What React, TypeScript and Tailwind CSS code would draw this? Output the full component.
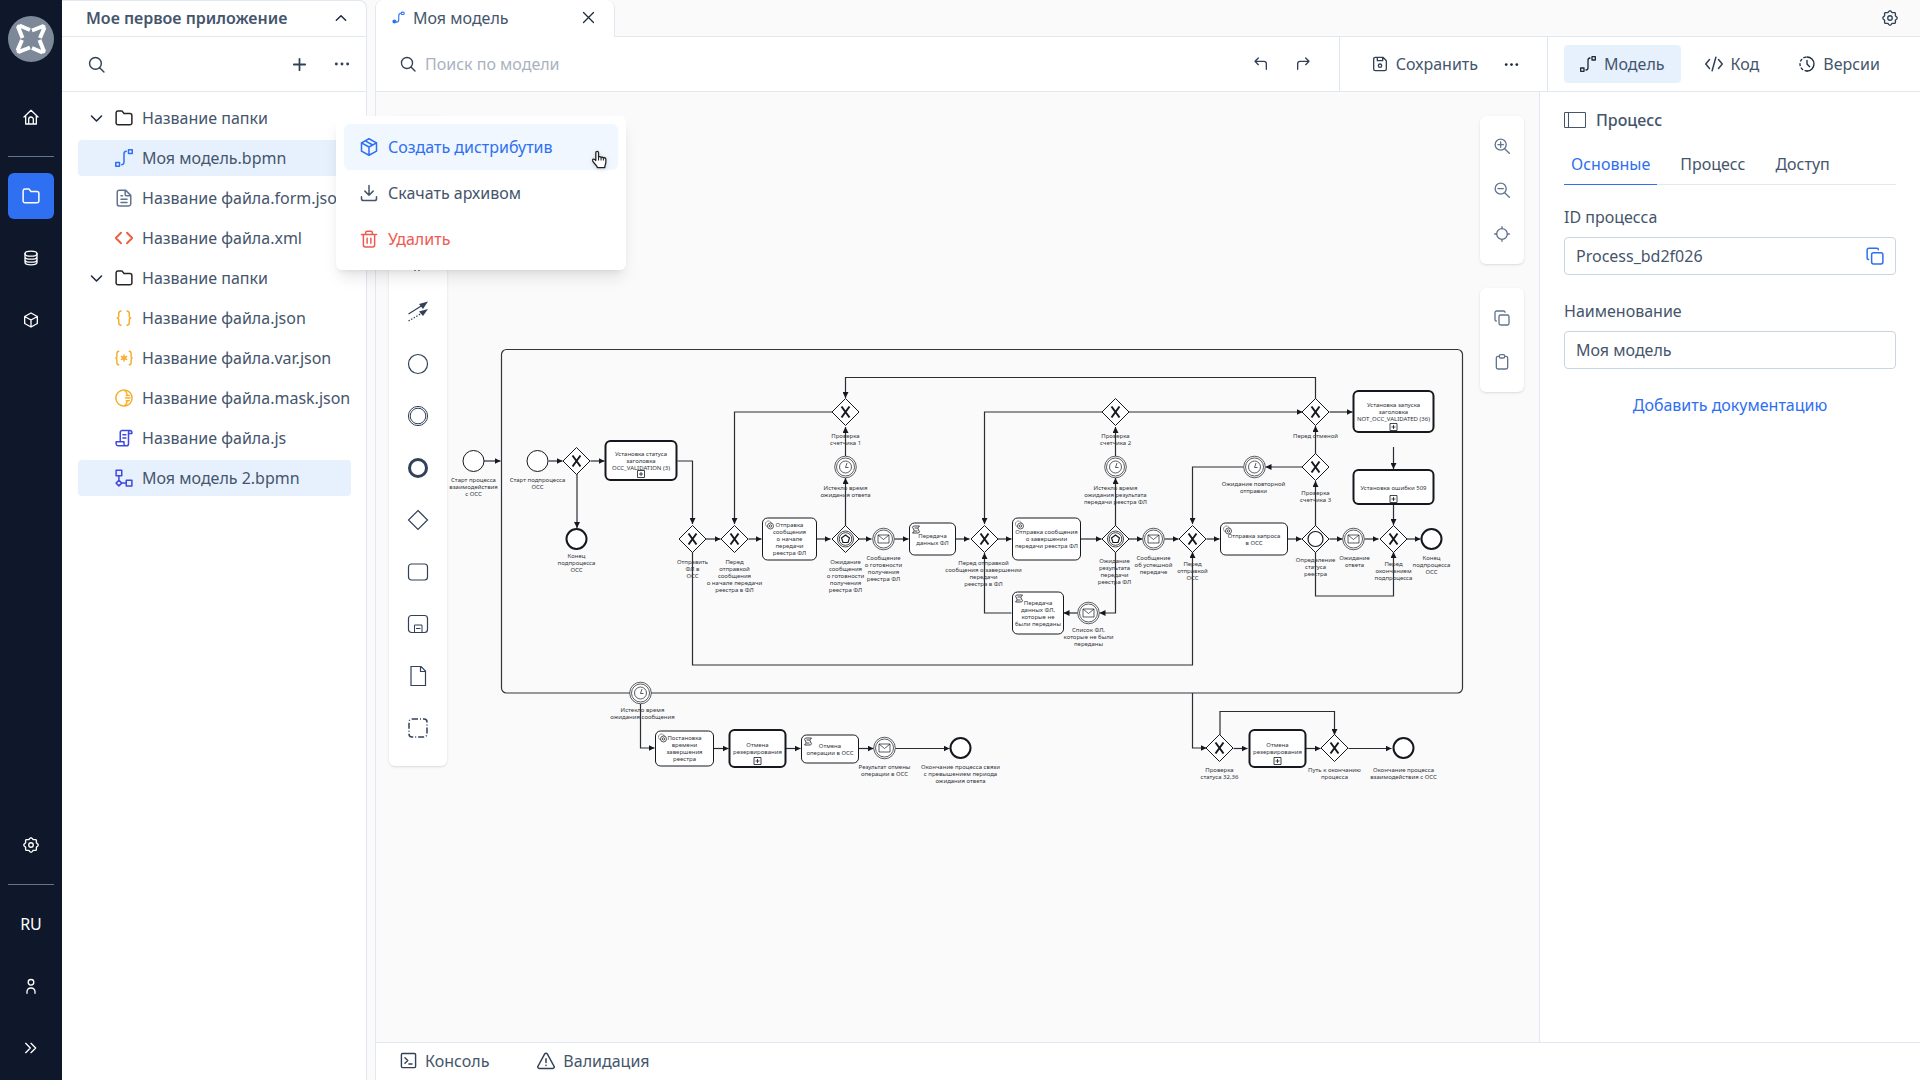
import type { ReactNode } from 'react';

/* ---------- icons ---------- */

type IconProps = { size?: number; className?: string; sw?: number; children?: ReactNode };

function Icon({ size = 18, className = '', sw = 2, children }: IconProps) {
  return (
    <svg
      width={size}
      height={size}
      viewBox="0 0 24 24"
      fill="none"
      stroke="currentColor"
      strokeWidth={sw}
      strokeLinecap="round"
      strokeLinejoin="round"
      className={`shrink-0 ${className}`}
      aria-hidden="true"
    >
      {children}
    </svg>
  );
}

const gearPath = (() => {
  const pts: string[] = [];
  for (let i = 0; i < 96; i++) {
    const a = (i / 96) * Math.PI * 2;
    const r = 9.8 + 1 * Math.cos(8 * a);
    pts.push(`${(12 + r * Math.sin(a)).toFixed(2)} ${(12 - r * Math.cos(a)).toFixed(2)}`);
  }
  return `M${pts.join('L')}Z`;
})();

const GearIcon = (p: IconProps) => (
  <Icon {...p}>
    <path d={gearPath} />
    <circle cx="12" cy="12" r="3.4" />
  </Icon>
);
const HomeIcon = (p: IconProps) => (
  <Icon {...p}>
    <path d="M1.5 12 12 2l10.500 10M4 10v12.500h16V10M8.500 22V15.500a3.500 3.500 0 0 1 7 0V22" />
  </Icon>
);
const FolderIcon = (p: IconProps) => (
  <Icon {...p}>
    <path d="M1.500 5v13.500A2.500 2.500 0 0 0 4 21h16a2.500 2.500 0 0 0 2.500-2.500v-10A2.500 2.500 0 0 0 20 6h-8L9.500 2.800H4A2.500 2.500 0 0 0 1.500 5Z" />
  </Icon>
);
const DatabaseIcon = (p: IconProps) => (
  <Icon {...p}>
    <ellipse cx="12" cy="5.500" rx="9" ry="3.800" />
    <path d="M3 5.500v13c0 2.100 4 3.800 9 3.800s9-1.700 9-3.800v-13M3 10c0 2.100 4 3.800 9 3.800s9-1.700 9-3.800M3 14.500c0 2.100 4 3.800 9 3.800s9-1.700 9-3.800" />
  </Icon>
);
const CubeIcon = (p: IconProps) => (
  <Icon {...p}>
    <path d="M12 1.500 21.500 6.800v10.400L12 22.500 2.500 17.200V6.800ZM2.500 6.800 12 12l9.500-5.200M12 12v10.500" />
  </Icon>
);
const PackageIcon = (p: IconProps) => (
  <Icon {...p}>
    <path d="M12 1 22 6.500v11L12 23 2 17.500v-11ZM2 6.500 12 12l10-5.500M12 12v11M7 3.800 17 9.300" />
  </Icon>
);
const UserIcon = (p: IconProps) => (
  <Icon {...p}>
    <circle cx="12" cy="6.500" r="4.200" />
    <path d="M6 23v-2.500A5.500 5.500 0 0 1 11.500 15h1a5.500 5.500 0 0 1 5.500 5.500V23" />
  </Icon>
);
const ExpandIcon = (p: IconProps) => (
  <Icon {...p}>
    <path d="m4 5 7 7-7 7M12 5l7 7-7 7" />
  </Icon>
);
const SearchIcon = (p: IconProps) => (
  <Icon {...p}>
    <circle cx="10.500" cy="10.500" r="8.300" />
    <path d="m16.500 16.500 6 6" />
  </Icon>
);
const PlusIcon = (p: IconProps) => (
  <Icon {...p}>
    <path d="M12 4v16M4 12h16" />
  </Icon>
);
const DotsIcon = (p: IconProps) => (
  <Icon {...p}>
    <g fill="currentColor" stroke="none">
      <circle cx="3.500" cy="12" r="2.200" />
      <circle cx="12" cy="12" r="2.200" />
      <circle cx="20.500" cy="12" r="2.200" />
    </g>
  </Icon>
);
const ChevronDown = (p: IconProps) => (
  <Icon {...p}>
    <path d="m4 8 8 8 8-8" />
  </Icon>
);
const ChevronUp = (p: IconProps) => (
  <Icon {...p}>
    <path d="m4 16 8-8 8 8" />
  </Icon>
);
const CloseIcon = (p: IconProps) => (
  <Icon {...p}>
    <path d="m4 4 16 16M20 4 4 20" />
  </Icon>
);
const FlowIcon = (p: IconProps) => (
  <Icon {...p}>
    <rect x="1" y="18" width="5" height="5" />
    <rect x="18" y="1" width="5" height="5" />
    <path d="M9 21a3.500 3.500 0 0 0 3-3.500v-11A3.500 3.500 0 0 1 15 3" />
  </Icon>
);
const FlowFilledIcon = (p: IconProps) => (
  <Icon {...p}>
    <circle cx="4.500" cy="19.500" r="2.800" fill="currentColor" />
    <rect x="17" y="2" width="5.500" height="4.500" rx="2" />
    <path d="M8 20.500c3.500 0 4.500-1.500 4.500-5V9c0-3.500.5-5 4-5" />
  </Icon>
);
const FileTextIcon = (p: IconProps) => (
  <Icon {...p}>
    <path d="M14 1.500H5.500a2.500 2.500 0 0 0-2.500 2.500v16a2.500 2.500 0 0 0 2.500 2.500h13A2.500 2.500 0 0 0 21 20V8.500ZM13.500 2v5a2 2 0 0 0 2 2h5M8 9h2M8 13.500h8M8 18h8" />
  </Icon>
);
const AngleIcon = (p: IconProps) => (
  <Icon {...p}>
    <path d="m8 5-7 7 7 7M16 5l7 7-7 7" />
  </Icon>
);
const BracesIcon = (p: IconProps) => (
  <Icon {...p}>
    <path d="M8 2.500c-3 0-3 1.500-3 4v2C5 10.500 4.500 12 3 12c1.500 0 2 1.500 2 3.500v2c0 2.500 0 4 3 4M16 2.500c3 0 3 1.500 3 4v2c0 2 .5 3.500 2 3.500-1.500 0-2 1.500-2 3.500v2c0 2.500 0 4-3 4" />
  </Icon>
);
const VarIcon = (p: IconProps) => (
  <Icon {...p}>
    <path d="M5 3C2.500 3 2.500 4.500 2.500 6.500v3c0 1.500-.5 2.500-1.500 2.500 1 0 1.500 1 1.500 2.500v3c0 2 0 3.500 2.500 3.500M19 3c2.500 0 2.500 1.500 2.500 3.500v3c0 1.500.5 2.500 1.500 2.500-1 0-1.500 1-1.500 2.500v3c0 2 0 3.500-2.500 3.500M12 8v8M8.500 10l7 4M15.500 10l-7 4" />
  </Icon>
);
const MaskIcon = (p: IconProps) => (
  <Icon {...p}>
    <circle cx="12" cy="12" r="10.800" />
    <path d="M13 2c3 2.500 3 4 3 5M13 22c3-2.500 3-4 3-5M15 8.500h4M14 12h6M15 15.500h4" />
  </Icon>
);
const ScriptFileIcon = (p: IconProps) => (
  <Icon {...p}>
    <path d="M7 17V4.500A2.500 2.500 0 0 1 9.500 2H20a2.500 2.500 0 0 1 2.500 3v1H18V4.500A2.300 2.300 0 0 1 20 2M18 6v13.500a2.800 2.800 0 0 1-2.800 2.800H4A2.500 2.500 0 0 1 1.500 20v-3H12v3a2.500 2.500 0 0 0 3 2.300M10.500 7.500h4M10.500 12h4" />
  </Icon>
);
const DiagramFileIcon = (p: IconProps) => (
  <Icon {...p}>
    <rect x="1.500" y="1.500" width="7.500" height="7.500" />
    <rect x="15" y="15" width="7.500" height="7.500" />
    <path d="M5.200 9v6M9 18.800h6M5.200 15 9 18.800l-3.800 3.700-3.700-3.700Z" />
  </Icon>
);
const DownloadIcon = (p: IconProps) => (
  <Icon {...p}>
    <path d="M12 2v13M6.500 9.500 12 15l5.500-5.500M2 17v2.500A2.500 2.500 0 0 0 4.500 22h15a2.500 2.500 0 0 0 2.500-2.500V17" />
  </Icon>
);
const TrashIcon = (p: IconProps) => (
  <Icon {...p}>
    <path d="M2 6h20M4.500 6v14A2.500 2.500 0 0 0 7 22.500h10a2.500 2.500 0 0 0 2.500-2.500V6M7.500 6V3.500a2 2 0 0 1 2-2h5a2 2 0 0 1 2 2V6M9.500 11v6.500M14.500 11v6.500" />
  </Icon>
);
const UndoIcon = (p: IconProps) => (
  <Icon {...p}>
    <path d="M8 3 3 8l5 5M3 8h13.500A3.500 3.500 0 0 1 20 11.500V20" />
  </Icon>
);
const RedoIcon = (p: IconProps) => (
  <Icon {...p}>
    <path d="m16 3 5 5-5 5M21 8H7.500A3.500 3.500 0 0 0 4 11.500V20" />
  </Icon>
);
const SaveIcon = (p: IconProps) => (
  <Icon {...p}>
    <path d="M2.500 4.500v15A2.500 2.500 0 0 0 5 22h14a2.500 2.500 0 0 0 2.500-2.500V7L16.500 2H5a2.500 2.500 0 0 0-2.500 2.500ZM8 2v5h8V2.500" />
    <circle cx="12" cy="14.500" r="2.500" />
  </Icon>
);
const CodeIcon = (p: IconProps) => (
  <Icon {...p}>
    <path d="m6 6-5 6 5 6M18 6l5 6-5 6M14.500 3l-5 18" />
  </Icon>
);
const HistoryIcon = (p: IconProps) => (
  <Icon {...p}>
    <path d="M12 1.500a10.500 10.500 0 0 1 0 21" />
    <path d="M12 22.500a10.500 10.500 0 0 1 0-21" strokeDasharray="3 4" />
    <path d="M12 6.500V12l4 4" />
  </Icon>
);
const ZoomInIcon = (p: IconProps) => (
  <Icon {...p}>
    <circle cx="10" cy="10" r="8.300" />
    <path d="m16 16 7 7M10 6v8M6 10h8" />
  </Icon>
);
const ZoomOutIcon = (p: IconProps) => (
  <Icon {...p}>
    <circle cx="10" cy="10" r="8.300" />
    <path d="m16 16 7 7M6 10h8" />
  </Icon>
);
const TargetIcon = (p: IconProps) => (
  <Icon {...p}>
    <circle cx="12" cy="12" r="8" />
    <path d="M12 1v3M12 20v3M1 12h3M20 12h3" />
  </Icon>
);
const CopyIcon = (p: IconProps) => (
  <Icon {...p}>
    <rect x="7.500" y="7.500" width="15" height="15" rx="2.500" />
    <path d="M3.500 16.500A2 2 0 0 1 1.500 14.500V4A2.500 2.500 0 0 1 4 1.500h10.500a2 2 0 0 1 2 2" />
  </Icon>
);
const ClipboardIcon = (p: IconProps) => (
  <Icon {...p}>
    <path d="M8 3.500H6A2.500 2.500 0 0 0 3.500 6v14A2.500 2.500 0 0 0 6 22.500h12a2.500 2.500 0 0 0 2.500-2.500V6A2.500 2.500 0 0 0 18 3.500h-2" />
    <rect x="8" y="1" width="8" height="5" rx="2" />
  </Icon>
);
const ConsoleIcon = (p: IconProps) => (
  <Icon {...p}>
    <rect x="2" y="2" width="20" height="20" rx="1.500" />
    <path d="m7 8 4 4-4 4M12.500 17H17" />
  </Icon>
);
const WarningIcon = (p: IconProps) => (
  <Icon {...p}>
    <path d="M10.300 2.500a2 2 0 0 1 3.400 0l9 16.500a2 2 0 0 1-1.700 3H3a2 2 0 0 1-1.700-3ZM12 9v5M12 17.500v.5" />
  </Icon>
);

function Logo() {
  return (
    <svg viewBox="0 0 46 46" className="size-[46px]" aria-hidden="true">
      <circle cx="23" cy="23" r="23" fill="#7d8899" />
      <g stroke="#fff" strokeWidth="4" strokeLinecap="butt">
        {[0, 90, 180, 270].map((r) => (
          <g key={r} transform={`rotate(${r} 23 23)`}>
            <path d="m22 14-10.500-4.500M10 10.500 14.500 22" />
          </g>
        ))}
      </g>
      <g fill="#fff">
        {[0, 90, 180, 270].map((r) => (
          <circle key={r} cx="11" cy="11" r="2.500" transform={`rotate(${r} 23 23)`} />
        ))}
      </g>
    </svg>
  );
}

function HandCursor() {
  return (
    <svg viewBox="0 0 16 18" className="pointer-events-none absolute top-[26px] right-2.5 h-[19px] w-[17px] drop-shadow-sm" aria-hidden="true">
      <path
        d="M4.500 10V2.500a1.300 1.300 0 0 1 2.600 0V7c0-1 2.400-1 2.400.3 0-1 2.200-.8 2.200.5 0-1 2.300-.7 2.300.8v3c0 2-1 2.800-1 5H6c-.5-2-3.500-4-4.500-6.500C1 8.500 3 8 4.500 10Z"
        fill="#fff"
        stroke="#222"
        strokeWidth="1.200"
        strokeLinejoin="round"
      />
      <path d="M7.100 7v3M9.500 7.500V10M11.700 8v2" stroke="#222" strokeWidth="1" />
    </svg>
  );
}

/* ---------- diagram ---------- */

const INK = '#15181e';

function Label({ x, y, lines }: { x: number; y: number; lines: string[] }) {
  return (
    <text x={x} textAnchor="middle" fontSize="6" fill="#30343b">
      {lines.map((l, i) => (
        <tspan key={i} x={x} y={y + 2 + i * 7}>
          {l}
        </tspan>
      ))}
    </text>
  );
}

function Gateway({ x, y, kind = 'x' }: { x: number; y: number; kind?: 'x' | 'event' | 'o' }) {
  return (
    <g>
      <path d={`M${x} ${y - 13.5}L${x + 13.5} ${y}L${x} ${y + 13.5}L${x - 13.5} ${y}Z`} fill="#fff" stroke={INK} />
      {kind === 'x' && (
        <path d={`M${x - 4} ${y - 5.5}L${x + 4} ${y + 5.5}M${x + 4} ${y - 5.5}L${x - 4} ${y + 5.5}`} stroke={INK} strokeWidth="2" />
      )}
      {kind === 'o' && <circle cx={x} cy={y} r="7.500" fill="#fff" stroke={INK} strokeWidth="1.200" />}
      {kind === 'event' && (
        <g fill="none" stroke={INK} strokeWidth="0.800">
          <circle cx={x} cy={y} r="8" />
          <circle cx={x} cy={y} r="6.300" />
          <path d={`M${x} ${y - 4}l4 3-1.500 4.500h-5l-1.500-4.500Z`} strokeWidth="1.200" />
        </g>
      )}
    </g>
  );
}

function Event({ x, y, kind }: { x: number; y: number; kind: 'start' | 'end' | 'timer' | 'message' }) {
  if (kind === 'start') return <circle cx={x} cy={y} r="10.500" fill="#fff" stroke={INK} />;
  if (kind === 'end') return <circle cx={x} cy={y} r="10" fill="#fff" stroke={INK} strokeWidth="2" />;
  return (
    <g fill="none" stroke={INK} strokeWidth="0.700">
      <circle cx={x} cy={y} r="10.800" fill="#fff" />
      <circle cx={x} cy={y} r="9" />
      {kind === 'timer' ? (
        <>
          <circle cx={x} cy={y} r="6" />
          <path d={`M${x + 1.5} ${y - 4}L${x} ${y + 0.5}L${x + 3} ${y + 0.5}`} />
        </>
      ) : (
        <path d={`M${x - 5.5} ${y - 4}h11v8h-11ZM${x - 5.5} ${y - 4}l5.500 4.500l5.500-4.500`} />
      )}
    </g>
  );
}

type TaskProps = {
  x: number;
  y: number;
  w: number;
  h: number;
  lines: string[];
  ty: number;
  thick?: boolean;
  plus?: number;
  icon?: 'service' | 'script';
};

function Task({ x, y, w, h, lines, ty, thick, plus, icon }: TaskProps) {
  const cx = x + w / 2;
  return (
    <g>
      <rect x={x} y={y} width={w} height={h} rx="5" fill="#fff" stroke={INK} strokeWidth={thick ? 2 : 1} />
      {icon === 'service' && (
        <g fill="none" stroke={INK} strokeWidth="0.700">
          <circle cx={x + 6} cy={y + 6} r="3" strokeDasharray="1 .5" />
          <circle cx={x + 8} cy={y + 8} r="3" fill="#fff" />
          <circle cx={x + 8} cy={y + 8} r="1.200" />
        </g>
      )}
      {icon === 'script' && (
        <path
          d={`M${x + 4} ${y + 3}h6q-3 2 -1 4t0 3h-6q3 -2 1 -4t0 -3M${x + 5} ${y + 5}h3M${x + 5} ${y + 8}h3`}
          fill="none"
          stroke={INK}
          strokeWidth="0.800"
        />
      )}
      <Label x={cx} y={ty} lines={lines} />
      {plus !== undefined && (
        <path d={`M${cx - 3.5} ${plus - 3.5}h7v7h-7ZM${cx} ${plus - 2}v4M${cx - 2} ${plus}h4`} fill="none" stroke={INK} strokeWidth="0.800" />
      )}
    </g>
  );
}

const flows = [
  'M483 461H500', 'M548 461H562', 'M590 461H604', 'M576.500 474V528', 'M677 461H692V524', 'M705 539H720', 'M748 539H761',
  'M832 412H734V524', 'M816 539H830', 'M845 526V478', 'M845 456V427', 'M1315 399V377.500H845V398', 'M858 539H871',
  'M894 539H908', 'M955 539H969', 'M1102 412H984V524', 'M997 539H1011', 'M1080 539H1101', 'M1115 526V478', 'M1115 456V427',
  'M1128 412H1302', 'M1115 552V613H1099', 'M1077 613H1063', 'M1011 613H984V553', 'M1128 539H1142', 'M1164 539H1178',
  'M692 552V665H1192V552', 'M1243 467H1192V524', 'M1206 539H1219', 'M1287 539H1301', 'M1315 526V481', 'M1315 454V426',
  'M1302 467H1265', 'M1329 412H1352', 'M1393 447V469', 'M1393 505V525', 'M1315 552V596H1393V552', 'M1329 539H1342',
  'M1364 539H1378', 'M1406 539H1420', 'M640 704V748H654', 'M713 748.500H728', 'M785 748.500H800', 'M858 748.500H873',
  'M895 748.500H949', 'M1192 693V748H1206', 'M1219.500 735V711.500H1334V735', 'M1233 748.500H1247', 'M1305 748.500H1320',
  'M1348 748.500H1391',
];

const gateways: { x: number; y: number; kind?: 'x' | 'event' | 'o' }[] = [
  { x: 576, y: 461 }, { x: 692, y: 539 }, { x: 734, y: 539 }, { x: 845, y: 539, kind: 'event' }, { x: 845, y: 412 },
  { x: 984, y: 539 }, { x: 1115, y: 539, kind: 'event' }, { x: 1115, y: 412 }, { x: 1192, y: 539 },
  { x: 1315, y: 539, kind: 'o' }, { x: 1315, y: 467 }, { x: 1315, y: 412 }, { x: 1393, y: 539 }, { x: 1219, y: 748 },
  { x: 1334, y: 748 },
];

const events: { x: number; y: number; kind: 'start' | 'end' | 'timer' | 'message' }[] = [
  { x: 473, y: 461, kind: 'start' }, { x: 537, y: 461, kind: 'start' }, { x: 576, y: 539, kind: 'end' },
  { x: 845, y: 467, kind: 'timer' }, { x: 883, y: 539, kind: 'message' }, { x: 1115, y: 467, kind: 'timer' },
  { x: 1088, y: 613, kind: 'message' }, { x: 1153, y: 539, kind: 'message' }, { x: 1254, y: 467, kind: 'timer' },
  { x: 1353, y: 539, kind: 'message' }, { x: 1431, y: 539, kind: 'end' }, { x: 640, y: 693, kind: 'timer' },
  { x: 884, y: 748, kind: 'message' }, { x: 960, y: 748, kind: 'end' }, { x: 1403, y: 748, kind: 'end' },
];

const tasks: TaskProps[] = [
  { x: 605, y: 441, w: 71, h: 39, thick: true, plus: 474, ty: 454, lines: ['Установка статуса', 'заголовка', 'OCC_VALIDATION (3)'] },
  { x: 762, y: 518, w: 54, h: 42, icon: 'service', ty: 525, lines: ['Отправка', 'сообщения', 'о начале', 'передачи', 'реестра ФЛ'] },
  { x: 909, y: 523, w: 46, h: 32, icon: 'script', ty: 536, lines: ['Передача', 'данных ФЛ'] },
  { x: 1012, y: 518, w: 68, h: 42, icon: 'service', ty: 532, lines: ['Отправка сообщения', 'о завершении', 'передачи реестра ФЛ'] },
  { x: 1012, y: 592, w: 51, h: 42, icon: 'script', ty: 603, lines: ['Передача', 'данных ФЛ,', 'которые не', 'были переданы'] },
  { x: 1220, y: 523, w: 67, h: 32, icon: 'service', ty: 536, lines: ['Отправка запроса', 'в ОСС'] },
  { x: 1353, y: 391, w: 80, h: 41, thick: true, plus: 427, ty: 405, lines: ['Установка запуска', 'заголовка', 'NOT_OCC_VALIDATED (36)'] },
  { x: 1353, y: 470, w: 80, h: 34, thick: true, plus: 499, ty: 488, lines: ['Установка ошибки 509'] },
  { x: 655, y: 731, w: 58, h: 35, icon: 'service', ty: 738, lines: ['Постановка', 'времени', 'завершения', 'реестра'] },
  { x: 729, y: 730, w: 56, h: 37, thick: true, plus: 761, ty: 745, lines: ['Отмена', 'резервирования'] },
  { x: 801, y: 735, w: 57, h: 28, icon: 'script', ty: 746, lines: ['Отмена', 'операции в ОСС'] },
  { x: 1249, y: 730, w: 56, h: 37, thick: true, plus: 761, ty: 745, lines: ['Отмена', 'резервирования'] },
];

const labels: { x: number; y: number; lines: string[] }[] = [
  { x: 473, y: 480, lines: ['Старт процесса', 'взаимодействия', 'с ОСС'] },
  { x: 537, y: 480, lines: ['Старт подпроцесса', 'ОСС'] },
  { x: 576, y: 556, lines: ['Конец', 'подпроцесса', 'ОСС'] },
  { x: 692, y: 562, lines: ['Отправить', 'ФЛ в', 'ОСС'] },
  { x: 734, y: 562, lines: ['Перед', 'отправкой', 'сообщения', 'о начале передачи', 'реестра в ФЛ'] },
  { x: 845, y: 562, lines: ['Ожидание', 'сообщения', 'о готовности', 'получения', 'реестра ФЛ'] },
  { x: 845, y: 488, lines: ['Истекло время', 'ожидания ответа'] },
  { x: 845, y: 436, lines: ['Проверка', 'счетчика 1'] },
  { x: 883, y: 558, lines: ['Сообщение', 'о готовности', 'получения', 'реестра ФЛ'] },
  { x: 983, y: 563, lines: ['Перед отправкой', 'сообщения о завершении', 'передачи', 'реестра в ФЛ'] },
  { x: 1114, y: 561, lines: ['Ожидание', 'результата', 'передачи', 'реестра ФЛ'] },
  { x: 1115, y: 488, lines: ['Истекло время', 'ожидания результата', 'передачи реестра ФЛ'] },
  { x: 1115, y: 436, lines: ['Проверка', 'счетчика 2'] },
  { x: 1088, y: 630, lines: ['Список ФЛ,', 'которые не были', 'переданы'] },
  { x: 1153, y: 558, lines: ['Сообщение', 'об успешной', 'передаче'] },
  { x: 1192, y: 564, lines: ['Перед', 'отправкой', 'ОСС'] },
  { x: 1315, y: 560, lines: ['Определение', 'статуса', 'реестра'] },
  { x: 1315, y: 493, lines: ['Проверка', 'счетчика 3'] },
  { x: 1315, y: 436, lines: ['Перед отменой'] },
  { x: 1253, y: 484, lines: ['Ожидание повторной', 'отправки'] },
  { x: 1393, y: 564, lines: ['Перед', 'окончанием', 'подпроцесса'] },
  { x: 1354, y: 558, lines: ['Ожидание', 'ответа'] },
  { x: 1431, y: 558, lines: ['Конец', 'подпроцесса', 'ОСС'] },
  { x: 642, y: 710, lines: ['Истекло время', 'ожидания сообщения'] },
  { x: 884, y: 767, lines: ['Результат отмены', 'операции в ОСС'] },
  { x: 960, y: 767, lines: ['Окончание процесса связи', 'с превышением периода', 'ожидания ответа'] },
  { x: 1219, y: 770, lines: ['Проверка', 'статуса 32,36'] },
  { x: 1334, y: 770, lines: ['Путь к окончанию', 'процесса'] },
  { x: 1403, y: 770, lines: ['Окончание процесса', 'взаимодействия с ОСС'] },
];

function Diagram() {
  return (
    <svg viewBox="376 92 1163 950" className="absolute top-0 left-0 h-[950px] w-[1163px]" role="img" aria-label="Схема процесса">
      <defs>
        <marker id="arrow" viewBox="0 0 6 6" refX="6" refY="3" markerWidth="6" markerHeight="6" markerUnits="userSpaceOnUse" orient="auto">
          <path d="M0 0 6 3 0 6Z" fill={INK} />
        </marker>
      </defs>
      <rect x="501.500" y="349.500" width="961" height="343.500" rx="5" fill="none" stroke="#33373d" strokeWidth="1.200" />
      <g transform="translate(0.5 0)">
        {flows.map((d) => (
          <path key={d} d={d} fill="none" stroke="#2a2d33" strokeWidth="1.200" markerEnd="url(#arrow)" />
        ))}
        {gateways.map((g, i) => <Gateway key={i} {...g} />)}
        {events.map((e, i) => <Event key={i} {...e} />)}
        {tasks.map((t, i) => <Task key={i} {...t} />)}
        {labels.map((l, i) => <Label key={i} {...l} />)}
      </g>
    </svg>
  );
}

/* ---------- palette ---------- */

const paletteTools: { name: string; art: ReactNode }[] = [
  { name: 'Рука', art: <path d="M6 12V5M9 11V3M12 11V3M15 12V5M6 12v4q4 5 9 0v-4" /> },
  { name: 'Лассо', art: <path d="M3 3h14v14H3Z" strokeDasharray="2 2" /> },
  { name: 'Пространство', art: <path d="M7 1v20M11 1v20M5 10H1M14 10h5" /> },
  {
    name: 'Соединение',
    art: (
      <>
        <path d="M.5 12 14 3.500" />
        <path d="M.5 19 14 11" strokeDasharray="1.500 1.500" />
        <path d="m11 2 9-2.500-5 7.500ZM11 9.500 20 7l-5 7Z" fill="currentColor" stroke="none" />
      </>
    ),
  },
  { name: 'Начальное событие', art: <circle cx="10" cy="10" r="9.500" /> },
  {
    name: 'Промежуточное событие',
    art: (
      <>
        <circle cx="10" cy="10" r="9.600" strokeWidth="1" />
        <circle cx="10" cy="10" r="7.800" strokeWidth="1" />
      </>
    ),
  },
  { name: 'Конечное событие', art: <circle cx="10" cy="10" r="8.500" strokeWidth="3" /> },
  { name: 'Шлюз', art: <path d="m10 .5 9.500 9.500-9.500 9.500L.5 10Z" /> },
  { name: 'Задача', art: <rect x=".5" y="2" width="19" height="16" rx="3" /> },
  {
    name: 'Подпроцесс',
    art: (
      <>
        <rect x=".5" y="1.500" width="19" height="17" rx="3" />
        <path d="M6.500 18v-7h7.500v7M8 14.500h4.500" strokeWidth="1" />
      </>
    ),
  },
  { name: 'Данные', art: <path d="M3 .5h10l4.500 4.500v14.500H3ZM12.500.5V5.500h5" /> },
  { name: 'Группа', art: <rect x="1" y="1" width="18" height="18" rx="3" strokeDasharray="6 2 1 2" strokeWidth="1.500" /> },
];

function Palette() {
  return (
    <div className="absolute top-6 left-[13px] flex flex-col rounded-md bg-white px-1 pt-3.5 pb-3 shadow-sm">
      {paletteTools.map((t) => (
        <button key={t.name} type="button" aria-label={t.name} className="flex h-[52px] w-[50px] items-center justify-center text-slate-700">
          <svg viewBox="-1 -1 22 22" className="size-[22px]" fill="none" stroke="currentColor" strokeWidth="1.200" aria-hidden="true">
            {t.art}
          </svg>
        </button>
      ))}
    </div>
  );
}

/* ---------- layout parts ---------- */

function RailButton({ label, active, children }: { label: string; active?: boolean; children: ReactNode }) {
  return (
    <button
      type="button"
      aria-label={label}
      className={`flex size-[46px] items-center justify-center rounded-md text-white ${active ? 'bg-[#2f6ff2]' : ''}`}
    >
      {children}
    </button>
  );
}

function Rail() {
  return (
    <nav aria-label="Главное меню" className="flex w-[62px] shrink-0 flex-col items-center justify-between bg-[#0f172a] pt-4 pb-[9px]">
      <div className="flex flex-col items-center gap-4">
        <a href="#" aria-label="На главную">
          <Logo />
        </a>
        <div className="mt-4 flex flex-col gap-4">
          <RailButton label="Домой">
            <HomeIcon size={16} />
          </RailButton>
          <hr className="border-slate-500" />
          <RailButton label="Файлы" active>
            <FolderIcon size={18} />
          </RailButton>
          <RailButton label="Данные">
            <DatabaseIcon size={16} />
          </RailButton>
          <RailButton label="Пакеты">
            <CubeIcon size={16} />
          </RailButton>
        </div>
      </div>
      <div className="flex flex-col gap-4">
        <RailButton label="Настройки">
          <GearIcon size={16} />
        </RailButton>
        <hr className="border-slate-500" />
        <RailButton label="Язык">
          <span className="text-base">RU</span>
        </RailButton>
        <RailButton label="Профиль">
          <UserIcon size={16} />
        </RailButton>
        <RailButton label="Развернуть">
          <ExpandIcon size={16} />
        </RailButton>
      </div>
    </nav>
  );
}

type Row = { name: string; icon: ReactNode; folder?: boolean; selected?: boolean };

const rows: Row[] = [
  { name: 'Название папки', folder: true, icon: <FolderIcon className="text-neutral-800" /> },
  { name: 'Моя модель.bpmn', selected: true, icon: <FlowIcon className="text-[#2f6ff2]" /> },
  { name: 'Название файла.form.json', icon: <FileTextIcon className="text-slate-500" /> },
  { name: 'Название файла.xml', icon: <AngleIcon sw={2.5} className="text-[#ee5f3f]" /> },
  { name: 'Название папки', folder: true, icon: <FolderIcon className="text-neutral-800" /> },
  { name: 'Название файла.json', icon: <BracesIcon className="text-[#f6ae2d]" /> },
  { name: 'Название файла.var.json', icon: <VarIcon className="text-[#f6ae2d]" /> },
  { name: 'Название файла.mask.json', icon: <MaskIcon className="text-[#f6ae2d]" /> },
  { name: 'Название файла.js', icon: <ScriptFileIcon className="text-[#3f48e0]" /> },
  { name: 'Моя модель 2.bpmn', selected: true, icon: <DiagramFileIcon className="text-[#3f48e0]" /> },
];

function FilePanel() {
  return (
    <aside className="flex w-[305px] shrink-0 flex-col rounded-tr-lg border-t border-r border-slate-200 bg-white">
      <button type="button" aria-expanded="true" className="flex h-9 shrink-0 items-center justify-between border-b border-slate-200 pr-[18px] pb-0.5 pl-6 text-base font-semibold">
        Мое первое приложение
        <ChevronUp size={14} sw={2.5} className="text-slate-800" />
      </button>
      <div className="flex h-[55px] shrink-0 items-center border-b border-slate-200 pr-4 pl-[26px] text-slate-700">
        <button type="button" aria-label="Поиск" className="mr-auto">
          <SearchIcon size={17} />
        </button>
        <button type="button" aria-label="Добавить" className="mr-[26px]">
          <PlusIcon size={17} sw={2.5} />
        </button>
        <button type="button" aria-label="Ещё">
          <DotsIcon size={16} />
        </button>
      </div>
      <ul className="flex flex-col gap-1 py-2 pr-[15px] pl-4">
        {rows.map((r, i) => (
          <li key={i}>
            <button
              type="button"
              className={`flex h-9 w-full items-center rounded-sm pl-[11px] text-base whitespace-nowrap ${r.selected ? 'bg-[#e7f1fe]' : ''}`}
            >
              <span className="mr-2.5 w-4">{r.folder && <ChevronDown size={15} sw={2.5} className="text-slate-800" />}</span>
              <span className="mr-[9px]">{r.icon}</span>
              {r.name}
            </button>
          </li>
        ))}
      </ul>
    </aside>
  );
}

function ModeButton({ icon, label, active }: { icon: ReactNode; label: string; active?: boolean }) {
  return (
    <button type="button" aria-pressed={!!active} className={`flex h-[38px] items-center gap-2 rounded-sm px-4 ${active ? 'bg-[#e7f1fe]' : ''}`}>
      {icon}
      {label}
    </button>
  );
}

function Toolbar() {
  return (
    <div className="flex h-[55px] shrink-0 items-stretch border-b border-slate-200 bg-white">
      <label className="flex min-w-0 flex-1 items-center gap-[9px] pl-6">
        <SearchIcon size={16} className="text-slate-700" />
        <input type="search" aria-label="Поиск по модели" placeholder="Поиск по модели" className="w-full min-w-0 outline-none placeholder:text-[#aab2bf]" />
      </label>
      <div className="flex items-center gap-[26px] border-r border-slate-200 pr-7 text-slate-700">
        <button type="button" aria-label="Отменить">
          <UndoIcon size={16} />
        </button>
        <button type="button" aria-label="Повторить">
          <RedoIcon size={16} />
        </button>
      </div>
      <div className="flex items-center gap-[26px] border-r border-slate-200 pr-7 pl-8">
        <button type="button" className="flex items-center gap-2">
          <SaveIcon size={16} className="text-slate-700" />
          Сохранить
        </button>
        <button type="button" aria-label="Ещё" className="text-slate-800">
          <DotsIcon size={15} />
        </button>
      </div>
      <div className="flex w-[372px] shrink-0 items-center gap-2 pl-4">
        <ModeButton active icon={<FlowIcon size={16} className="text-slate-800" />} label="Модель" />
        <ModeButton icon={<CodeIcon size={18} className="text-slate-700" />} label="Код" />
        <ModeButton icon={<HistoryIcon size={16} className="text-slate-800" />} label="Версии" />
      </div>
    </div>
  );
}

function ToolStack({ items }: { items: { name: string; icon: ReactNode }[] }) {
  return (
    <div className="flex w-11 flex-col rounded-md bg-white py-2 text-slate-500 shadow-sm">
      {items.map((it) => (
        <button key={it.name} type="button" aria-label={it.name} className="flex h-11 items-center justify-center">
          {it.icon}
        </button>
      ))}
    </div>
  );
}

function Canvas() {
  return (
    <section aria-label="Холст" className="relative min-w-0 flex-1 overflow-hidden bg-[#fafafa]">
      <Diagram />
      <Palette />
      <div className="absolute top-6 right-[15px] flex flex-col gap-6">
        <ToolStack
          items={[
            { name: 'Приблизить', icon: <ZoomInIcon size={16} /> },
            { name: 'Отдалить', icon: <ZoomOutIcon size={16} /> },
            { name: 'По центру', icon: <TargetIcon size={16} /> },
          ]}
        />
        <ToolStack
          items={[
            { name: 'Копировать', icon: <CopyIcon size={16} /> },
            { name: 'Вставить', icon: <ClipboardIcon size={16} /> },
          ]}
        />
      </div>
    </section>
  );
}

function Properties() {
  return (
    <aside className="flex w-[381px] shrink-0 flex-col border-l border-slate-200 bg-white pt-4 pr-6 pl-6">
      <h2 className="flex items-center gap-2.5 text-base font-medium">
        <svg viewBox="0 0 22 16" className="h-4 w-[22px]" fill="none" stroke="#475569" aria-hidden="true">
          <path d="M.5.5h21v15H.5ZM4.500.5v15" />
        </svg>
        Процесс
      </h2>
      <div role="tablist" className="mt-3 flex border-b border-slate-200">
        <button type="button" role="tab" aria-selected="true" className="-mb-px h-[41px] border-b border-[#2f6ff2] px-[7px] text-[#2f6ff2]">
          Основные
        </button>
        <button type="button" role="tab" aria-selected="false" className="ml-4 px-[7px]">
          Процесс
        </button>
        <button type="button" role="tab" aria-selected="false" className="ml-4 px-[7px]">
          Доступ
        </button>
      </div>
      <label htmlFor="process-id" className="mt-5">
        ID процесса
      </label>
      <div className="mt-2 flex h-[38px] items-center rounded-sm border border-slate-300 px-[11px]">
        <input id="process-id" type="text" defaultValue="Process_bd2f026" className="min-w-0 flex-1 outline-none" />
        <button type="button" aria-label="Скопировать ID" className="text-[#2f6ff2]">
          <CopyIcon size={18} />
        </button>
      </div>
      <label htmlFor="process-name" className="mt-6">
        Наименование
      </label>
      <input id="process-name" type="text" defaultValue="Моя модель" className="mt-2 h-[38px] rounded-sm border border-slate-300 px-[11px] outline-none" />
      <button type="button" className="mt-6 self-center text-[#2f6ff2]">
        Добавить документацию
      </button>
    </aside>
  );
}

function ContextMenu() {
  return (
    <div role="menu" className="absolute top-[116px] left-[336px] flex w-[290px] flex-col rounded-md bg-white p-2 shadow-lg">
      <button type="button" role="menuitem" className="relative flex h-[46px] items-center gap-2.5 rounded-md bg-[#f0f7fe] px-4 text-[#2f6ff2]">
        <PackageIcon size={18} />
        Создать дистрибутив
        <HandCursor />
      </button>
      <button type="button" role="menuitem" className="flex h-[46px] items-center gap-2.5 px-4">
        <DownloadIcon size={18} />
        Скачать архивом
      </button>
      <button type="button" role="menuitem" className="flex h-[46px] items-center gap-2.5 px-4 text-[#ee5b50]">
        <TrashIcon size={18} />
        Удалить
      </button>
    </div>
  );
}

export default function App() {
  return (
    <div className="relative flex h-screen overflow-hidden bg-[#fafafa] font-['Noto_Sans',sans-serif] text-base text-slate-600">
      <Rail />
      <FilePanel />
      <main className="ml-2 flex min-w-0 flex-1 flex-col rounded-tl-lg border-l border-slate-200">
        <div className="flex h-[37px] shrink-0">
          <div className="flex w-[239px] items-center rounded-t-lg border-r border-slate-200 bg-white pr-[18px] pb-0.5 pl-4">
            <FlowFilledIcon size={13} className="text-[#2f6ff2]" />
            <span className="ml-2">Моя модель</span>
            <button type="button" aria-label="Закрыть вкладку" className="ml-auto text-slate-800">
              <CloseIcon size={15} />
            </button>
          </div>
          <div className="flex flex-1 items-center justify-end border-b border-slate-200 pr-[22px]">
            <button type="button" aria-label="Настройки" className="text-slate-700">
              <GearIcon size={16} />
            </button>
          </div>
        </div>
        <Toolbar />
        <div className="flex min-h-0 flex-1">
          <Canvas />
          <Properties />
        </div>
        <footer className="flex h-[38px] shrink-0 items-center gap-12 border-t border-slate-200 bg-white pb-0.5 pl-6">
          <button type="button" className="flex items-center gap-2">
            <ConsoleIcon size={17} className="text-slate-700" />
            Консоль
          </button>
          <button type="button" className="flex items-center gap-2">
            <WarningIcon size={18} className="text-slate-700" />
            Валидация
          </button>
        </footer>
      </main>
      <ContextMenu />
    </div>
  );
}
